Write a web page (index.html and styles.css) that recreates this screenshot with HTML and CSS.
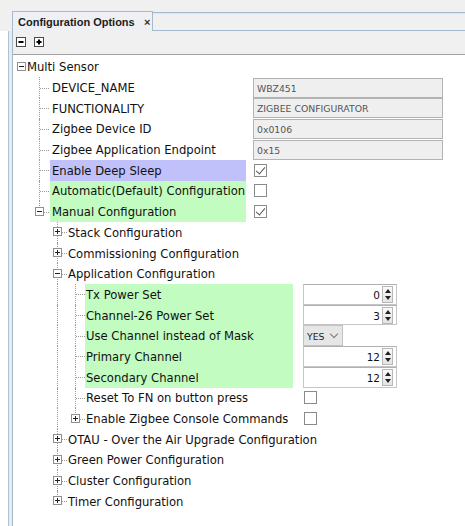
FILE: index.html
```html
<!DOCTYPE html>
<html>
<head>
<meta charset="utf-8">
<link rel="stylesheet" href="styles.css">
</head>
<body>
<div class="top"></div>
<div class="tabbar">
  <div class="tab"><span class="tabtitle">Configuration Options</span><span class="close">×</span></div>
  <div class="tabfill"></div>
</div>
<div class="frame">
  <div class="panel">
    <div class="toolbar">
      <span class="tbtn"><svg width="10" height="10" viewBox="0 0 10 10"><rect x="0.5" y="0.5" width="9" height="9" fill="#fff" stroke="#4a4a4a"/><path d="M2.5 5H7.5" stroke="#000" stroke-width="2"/></svg></span>
      <span class="tbtn"><svg width="10" height="10" viewBox="0 0 10 10"><rect x="0.5" y="0.5" width="9" height="9" fill="#fff" stroke="#4a4a4a"/><path d="M2.5 5H7.5M5 2.5V7.5" stroke="#000" stroke-width="2"/></svg></span>
    </div>
    <div class="tree">
      <div class="row">
        <span class="c root"><span class="box minus"></span></span>
        <span class="lbl l0">Multi Sensor</span>
      </div>

      <div class="row"><span class="g"></span><span class="c mid"></span><span class="lbl l1">DEVICE_NAME</span><span class="val v1"><span class="field">WBZ451</span></span></div>
      <div class="row"><span class="g"></span><span class="c mid"></span><span class="lbl l1">FUNCTIONALITY</span><span class="val v1"><span class="field">ZIGBEE CONFIGURATOR</span></span></div>
      <div class="row"><span class="g"></span><span class="c mid"></span><span class="lbl l1">Zigbee Device ID</span><span class="val v1"><span class="field">0x0106</span></span></div>
      <div class="row"><span class="g"></span><span class="c mid"></span><span class="lbl l1">Zigbee Application Endpoint</span><span class="val v1"><span class="field">0x15</span></span></div>
      <div class="row"><span class="g"></span><span class="c mid"></span><span class="lbl l1 sel">Enable Deep Sleep</span><span class="val v1"><span class="cb on"></span></span></div>
      <div class="row"><span class="g"></span><span class="c mid"></span><span class="lbl l1 hl">Automatic(Default) Configuration</span><span class="val v1"><span class="cb"></span></span></div>
      <div class="row"><span class="g"></span><span class="c last"><span class="box minus"></span></span><span class="lbl l1 hl">Manual Configuration</span><span class="val v1"><span class="cb on"></span></span></div>

      <div class="row"><span class="g"></span><span class="g"></span><span class="c mid"><span class="box plus"></span></span><span class="lbl l2">Stack Configuration</span></div>
      <div class="row"><span class="g"></span><span class="g"></span><span class="c mid"><span class="box plus"></span></span><span class="lbl l2">Commissioning Configuration</span></div>
      <div class="row"><span class="g"></span><span class="g"></span><span class="c mid"><span class="box minus"></span></span><span class="lbl l2">Application Configuration</span></div>

      <div class="row"><span class="g"></span><span class="g"></span><span class="g line"></span><span class="c mid"></span><span class="lbl l3 hl">Tx Power Set</span><span class="val v3"><span class="spin"><span class="num">0</span><span class="arrows"></span></span></span></div>
      <div class="row"><span class="g"></span><span class="g"></span><span class="g line"></span><span class="c mid"></span><span class="lbl l3 hl">Channel-26 Power Set</span><span class="val v3"><span class="spin"><span class="num">3</span><span class="arrows"></span></span></span></div>
      <div class="row"><span class="g"></span><span class="g"></span><span class="g line"></span><span class="c mid"></span><span class="lbl l3 hl">Use Channel instead of Mask</span><span class="val v3"><span class="combo">YES<span class="chev"></span></span></span></div>
      <div class="row"><span class="g"></span><span class="g"></span><span class="g line"></span><span class="c mid"></span><span class="lbl l3 hl">Primary Channel</span><span class="val v3"><span class="spin"><span class="num">12</span><span class="arrows"></span></span></span></div>
      <div class="row"><span class="g"></span><span class="g"></span><span class="g line"></span><span class="c mid"></span><span class="lbl l3 hl">Secondary Channel</span><span class="val v3"><span class="spin"><span class="num">12</span><span class="arrows"></span></span></span></div>
      <div class="row"><span class="g"></span><span class="g"></span><span class="g line"></span><span class="c mid"></span><span class="lbl l3">Reset To FN on button press</span><span class="val v3"><span class="cb"></span></span></div>
      <div class="row"><span class="g"></span><span class="g"></span><span class="g line"></span><span class="c last"><span class="box plus"></span></span><span class="lbl l3">Enable Zigbee Console Commands</span><span class="val v3"><span class="cb"></span></span></div>

      <div class="row"><span class="g"></span><span class="g"></span><span class="c mid"><span class="box plus"></span></span><span class="lbl l2">OTAU - Over the Air Upgrade Configuration</span></div>
      <div class="row"><span class="g"></span><span class="g"></span><span class="c mid"><span class="box plus"></span></span><span class="lbl l2">Green Power Configuration</span></div>
      <div class="row"><span class="g"></span><span class="g"></span><span class="c mid"><span class="box plus"></span></span><span class="lbl l2">Cluster Configuration</span></div>
      <div class="row"><span class="g"></span><span class="g"></span><span class="c last"><span class="box plus"></span></span><span class="lbl l2">Timer Configuration</span></div>
    </div>
  </div>
</div>
</body>
</html>
```
FILE: styles.css
```css
* { box-sizing: border-box; }
html, body { margin: 0; padding: 0; background: #fff; }
body {
  width: 465px;
  height: 526px;
  overflow: hidden;
  font-family: "DejaVu Sans", Tahoma, sans-serif;
  color: #111;
}
.top { height: 11px; background: #f0f0f0; }
.tabbar { display: flex; height: 20px; background: #f0f0f0; }
.tab {
  margin-left: 12px;
  width: 141px;
  height: 20px;
  border: 1px solid #a7b9cc;
  border-bottom: none;
  background: #eef0f3;
  display: flex;
  align-items: center;
  padding-left: 5px;
  font-family: "Liberation Sans", Arial, sans-serif;
  font-weight: bold;
  font-size: 11px;
  color: #1c1c1c;
}
.tabtitle { width: 126px; }
.close { font-size: 11px; font-weight: bold; color: #333; }
.tabfill {
  flex: 1;
  margin-top: 1px;
  border-top: 1px solid #a4b8cf;
  border-bottom: 1px solid #a4b8cf;
  box-shadow: inset 0 1px 0 #dfe6ee;
}
.frame {
  margin-left: 8px;
  border-left: 1px solid #b2c0cf;
  padding-left: 3px;
  background: #e6ebf0;
  height: 495px;
}
.panel {
  border-left: 1px solid #a8b7c7;
  background: #fff;
  height: 100%;
}
.toolbar {
  height: 24px;
  background: #f0f0f0;
  border-bottom: 1px solid #a2a2a2;
  display: flex;
  align-items: center;
  gap: 8px;
  padding-left: 3px;
  padding-bottom: 1px;
}
.tbtn { display: flex; }
.tree { padding-top: 1.5px; }
.row {
  display: flex;
  align-items: center;
  height: 20.7px;
  font-size: 11.6px;
  white-space: nowrap;
}
.g, .c { position: relative; width: 18px; height: 100%; flex: none; }
.g.line::before, .c::before {
  content: "";
  position: absolute;
  left: 8px;
  top: 0;
  bottom: 0;
  border-left: 1px dotted #9a9a9a;
}
.c.last::before { bottom: 50%; }
.c::after {
  content: "";
  position: absolute;
  left: 9px;
  right: 0;
  top: 50%;
  border-top: 1px dotted #9a9a9a;
}
.c.root { width: 13px; }
.c.root::before { display: none; }
.c.root::after { left: 12px; right: 0; }
.box {
  position: absolute;
  left: 4px;
  top: 50%;
  margin-top: -5px;
  width: 9px;
  height: 9px;
  border: 1px solid #8f8f8f;
  background: #fff;
  z-index: 1;
}
.box::before {
  content: "";
  position: absolute;
  left: 1px; right: 1px;
  top: 3px;
  border-top: 1px solid #222;
}
.box.plus::after {
  content: "";
  position: absolute;
  top: 1px; bottom: 1px;
  left: 3px;
  border-left: 1px solid #222;
}
.lbl { height: 100%; display: flex; align-items: center; padding-left: 1px; padding-top: 1px; }
.l0 { padding-left: 1px; }
.l1 { margin-left: 1px; width: 196px; padding-left: 2px; }
.l2 { padding-left: 1px; }
.l3 { width: 208px; padding-left: 1px; }
.sel { background: #c0c0fa; }
.hl { background: #c2fcc0; }
.val { height: 100%; display: flex; align-items: center; }
.v1 { margin-left: 7px; }
.v3 { margin-left: 10px; }
.field {
  width: 190px;
  height: 20px;
  border: 1px solid #b3b3b3;
  background: #efefef;
  color: #555;
  font-size: 9.3px;
  display: flex;
  align-items: center;
  padding-left: 3px;
  padding-top: 1px;
}
.cb {
  width: 13px;
  height: 13px;
  border: 1px solid #8a8a8a;
  background: #fff;
  margin-left: 1px;
  position: relative;
}
.cb.on::after {
  content: "";
  position: absolute;
  left: 3px;
  top: 0px;
  width: 4px;
  height: 8px;
  border-right: 1px solid #555;
  border-bottom: 1px solid #555;
  transform: rotate(40deg);
}
.spin {
  width: 94px;
  height: 20.7px;
  border: 1px solid #c6c6c6;
  border-top-color: #b0b0b0;
  background: #fff;
  display: flex;
  align-items: center;
  justify-content: flex-end;
  padding-right: 3px;
}
.num { font-size: 10.5px; color: #111; margin-right: 2px; padding-top: 1px; }
.arrows {
  width: 11px;
  height: 17px;
  border: 1px solid #b8b8b8;
  background: linear-gradient(#fafafa, #e4e4e4);
  position: relative;
}
.arrows::before {
  content: "";
  position: absolute;
  left: 2px; top: 2px;
  border-left: 3px solid transparent;
  border-right: 3px solid transparent;
  border-bottom: 4px solid #222;
}
.arrows::after {
  content: "";
  position: absolute;
  left: 2px; bottom: 2px;
  border-left: 3px solid transparent;
  border-right: 3px solid transparent;
  border-top: 4px solid #222;
  box-shadow: 0 -4px 0 -3px #999;
}
.combo {
  width: 40px;
  height: 20.7px;
  border: 1px solid #c2c2c2;
  background: #e6e6e6;
  font-size: 9.3px;
  color: #222;
  display: flex;
  align-items: center;
  padding-left: 3px;
  padding-top: 1px;
}
.chev {
  width: 6px;
  height: 6px;
  border-right: 1px solid #777;
  border-bottom: 1px solid #777;
  transform: rotate(45deg);
  margin-left: 7px;
  margin-top: -4px;
}
```
